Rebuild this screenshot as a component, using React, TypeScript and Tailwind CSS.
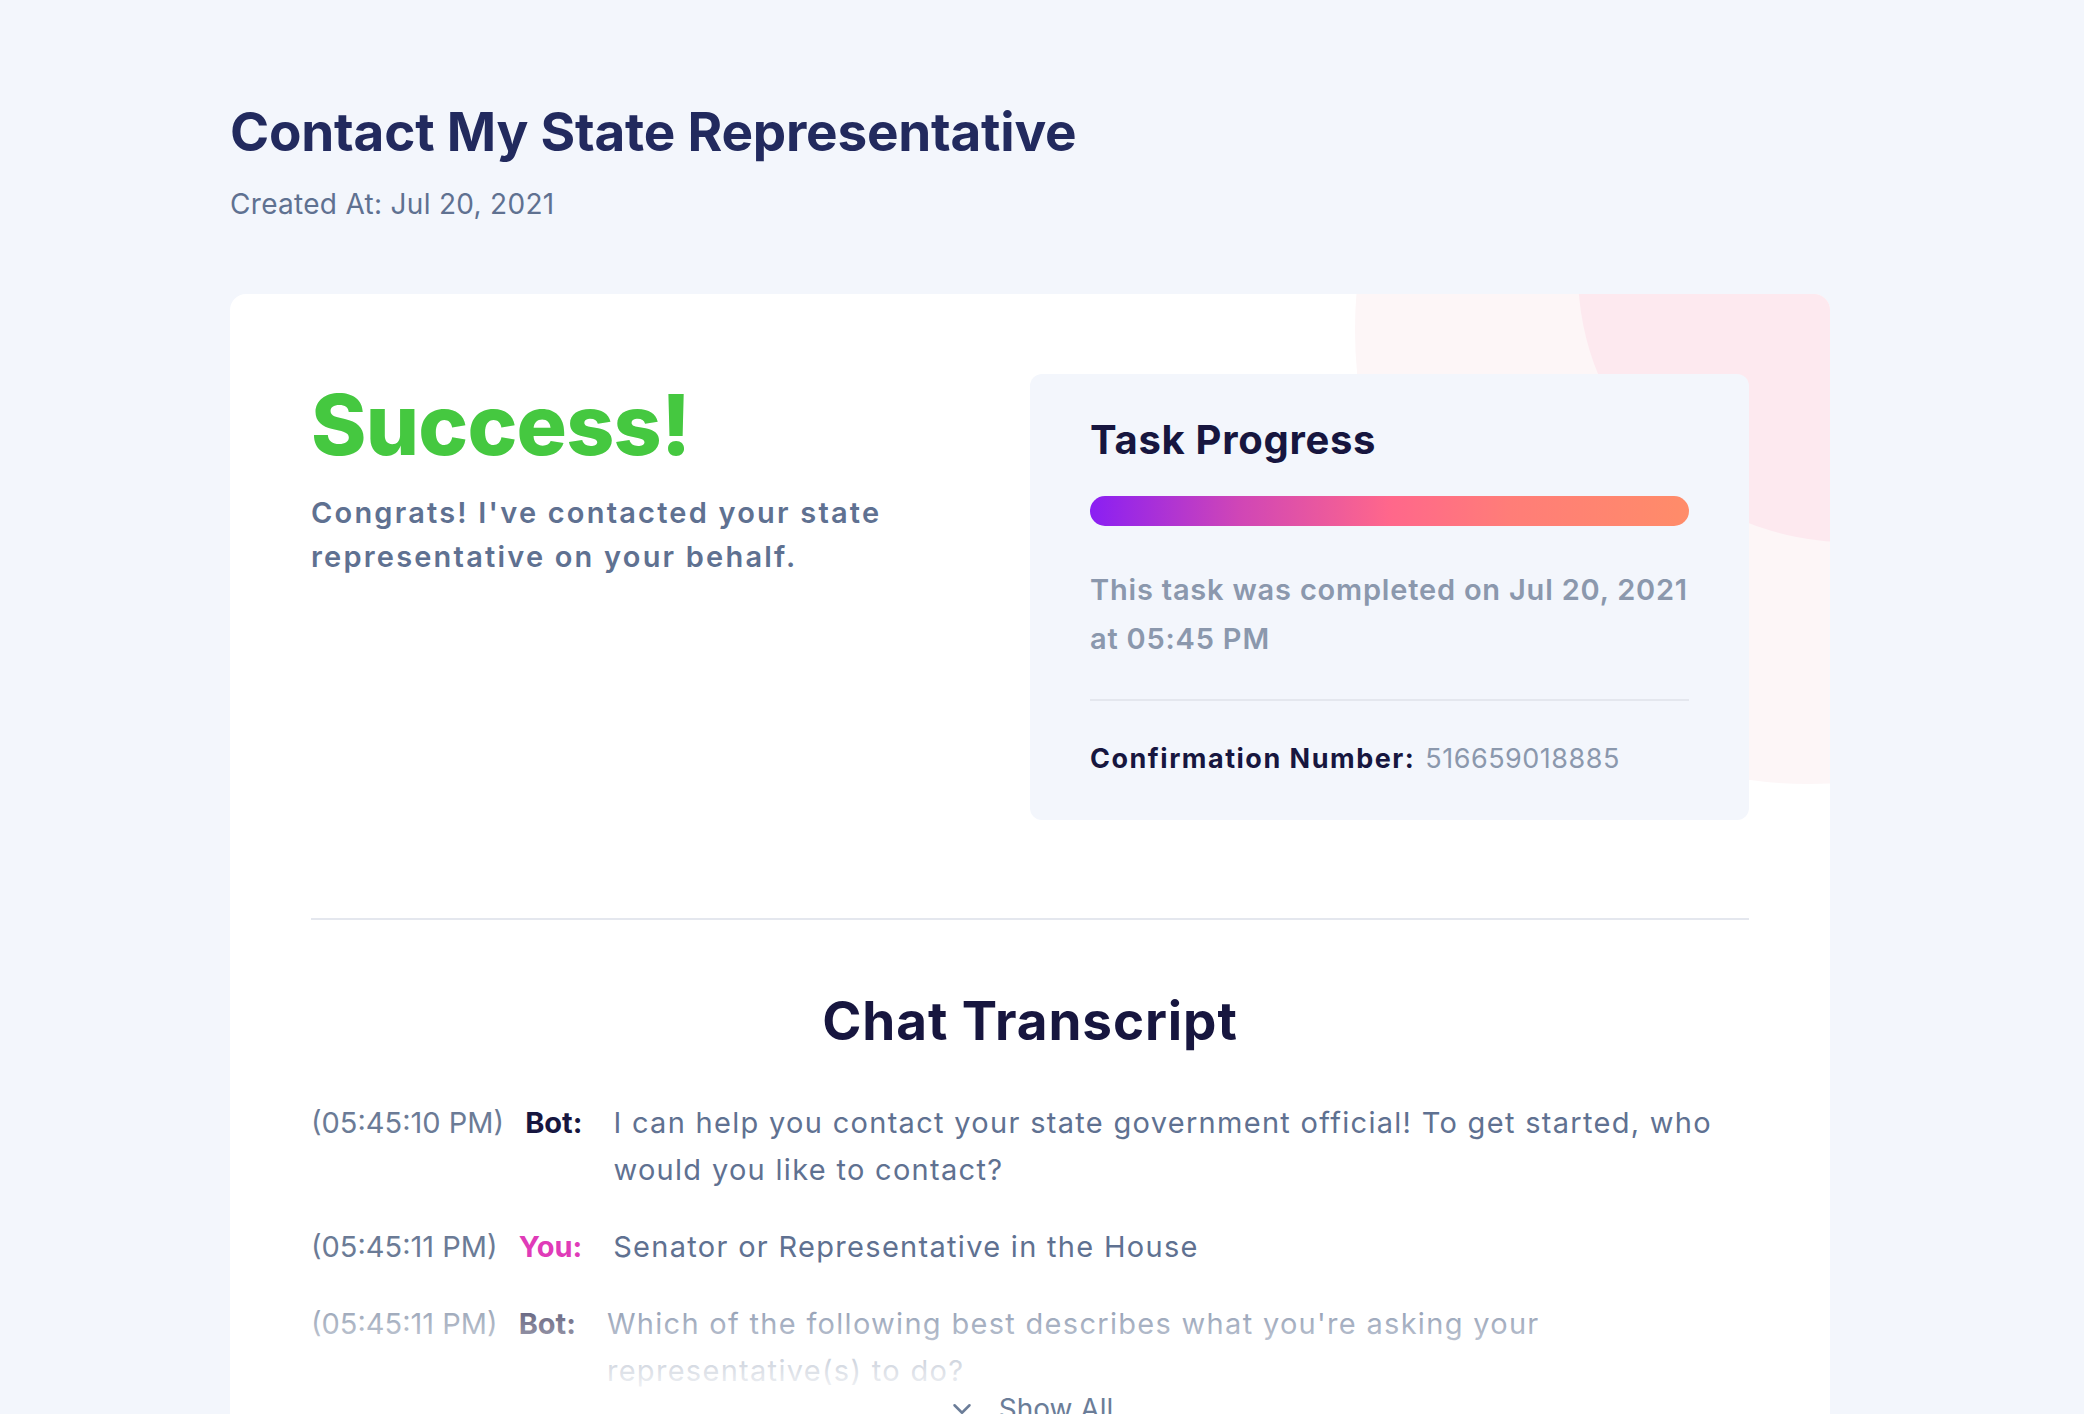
import { ChevronDown } from "lucide-react";

interface ChatLine {
  time: string;
  who: "Bot" | "You";
  text: string;
}

const transcript: ChatLine[] = [
  {
    time: "(05:45:10 PM)",
    who: "Bot",
    text: "I can help you contact your state government official! To get started, who would you like to contact?",
  },
  {
    time: "(05:45:11 PM)",
    who: "You",
    text: "Senator or Representative in the House",
  },
  {
    time: "(05:45:11 PM)",
    who: "Bot",
    text: "Which of the following best describes what you're asking your representative(s) to do?",
  },
];

export default function App() {
  return (
    <div className="min-h-screen bg-[#f3f6fc] font-['Inter',sans-serif] pl-[230px] pr-[254px] pt-[100px]">
      <h1 className="text-[53px] font-bold leading-[64px] tracking-[-0.2px] text-[#222a5e]">
        Contact My State Representative
      </h1>
      <p className="mt-[19px] text-[28px] leading-[42px] tracking-[0.3px] text-[#5f7191]">
        Created At: Jul 20, 2021
      </p>

      <div className="relative mt-[69px] overflow-hidden rounded-[16px] bg-white px-[81px] pt-[80px]">
        {/* decorative blobs */}
        <div className="absolute left-[1125px] top-[-418px] h-[908px] w-[908px] rounded-full bg-[#fdf6f7]" />
        <div className="absolute left-[1348px] top-[-292px] h-[540px] w-[540px] rounded-full bg-[#fde9ef]" />

        <div className="relative grid grid-cols-2">
          <div>
            <h2 className="mt-[9px] text-[84px] font-extrabold leading-none tracking-[-0.8px] text-[#45c840]">
              Success!
            </h2>
            <p className="mt-[24px] max-w-[640px] text-[29px] font-semibold leading-[44px] tracking-[2.2px] text-[#5f7191]">
              Congrats! I've contacted your state representative on your behalf.
            </p>
          </div>

          <div className="h-[446px] rounded-[12px] bg-[#f3f6fc] px-[60px] pt-[42px]">
            <h3 className="text-[40px] font-bold leading-[48px] tracking-[0.7px] text-[#17163f]">
              Task Progress
            </h3>
            <div className="mt-[32px] h-[30px] rounded-full bg-[linear-gradient(90deg,#8a1ff3_0%,#d046b6_25%,#ff678b_50%,#ff7d78_70%,#ff8c69_100%)]" />
            <p className="mt-[39px] text-[29px] font-semibold leading-[49px] tracking-[0.8px] text-[#8b98ad]">
              This task was completed on Jul 20, 2021 at 05:45 PM
            </p>
            <div className="mt-[36px] h-[2px] bg-[#e4e7ee]" />
            <p className="mt-[38px] text-[27px] leading-[40px]">
              <span className="font-bold tracking-[1.5px] text-[#17163f]">Confirmation Number:</span>
              <span className="ml-[10px] tracking-[0.5px] text-[#8b98ad]">516659018885</span>
            </p>
          </div>
        </div>

        <div className="relative mt-[98px] h-[2px] bg-[#e4e7ee]" />

        <h2 className="relative mt-[69px] text-center text-[53px] font-bold leading-[64px] tracking-[0.9px] text-[#17163f]">
          Chat Transcript
        </h2>

        <div className="relative mt-[46px]">
          <div className="flex flex-col gap-[30px]">
            {transcript.map((line, i) => (
              <div key={i} className="flex items-start text-[29px] leading-[47px]">
                <span className="shrink-0 text-[#6b7b96]">{line.time}</span>
                <span
                  className={
                    "ml-[21px] shrink-0 font-bold " +
                    (line.who === "You" ? "text-[#e03bb8]" : "text-[#17163f]")
                  }
                >
                  {line.who}:
                </span>
                <span className="ml-[31px] tracking-[1.3px] text-[#5f7191]">{line.text}</span>
              </div>
            ))}
          </div>
          <div className="absolute inset-x-0 bottom-0 h-[132px] bg-gradient-to-b from-white/0 to-white/95" />
        </div>

        <button className="relative -mt-[5px] flex w-full items-center justify-center gap-[22px] pb-[40px] text-[28px] leading-[40px] text-[#6b7d98]">
          <ChevronDown size={30} strokeWidth={2} />
          Show All
        </button>
      </div>
    </div>
  );
}
